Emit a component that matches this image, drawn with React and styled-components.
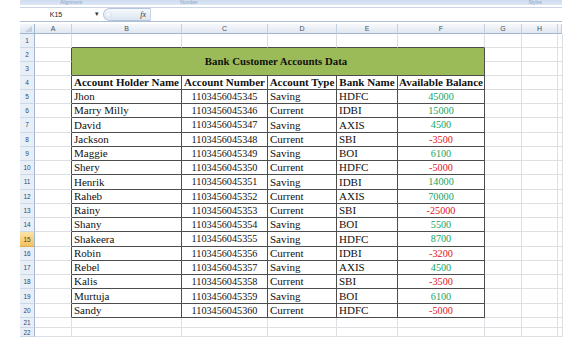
import React from "react";
import styled, { createGlobalStyle } from "styled-components";

const COLS = "15px 37px 110px 86px 69px 61px 87px 37px 36px 4px";
const ROWS =
  "10px 14px 14px 13.5px repeat(17, 14.28px) 10px 9px";

const GRID = "#dcdfe3";
const DARK = "#4d4d4d";

const accounts = [
  ["Jhon", "1103456045345", "Saving", "HDFC", 45000],
  ["Marry Milly", "1103456045346", "Current", "IDBI", 15000],
  ["David", "1103456045347", "Saving", "AXIS", 4500],
  ["Jackson", "1103456045348", "Current", "SBI", -3500],
  ["Maggie", "1103456045349", "Saving", "BOI", 6100],
  ["Shery", "1103456045350", "Current", "HDFC", -5000],
  ["Henrik", "1103456045351", "Saving", "IDBI", 14000],
  ["Raheb", "1103456045352", "Current", "AXIS", 70000],
  ["Rainy", "1103456045353", "Current", "SBI", -25000],
  ["Shany", "1103456045354", "Saving", "BOI", 5500],
  ["Shakeera", "1103456045355", "Saving", "HDFC", 8700],
  ["Robin", "1103456045356", "Current", "IDBI", -3200],
  ["Rebel", "1103456045357", "Saving", "AXIS", 4500],
  ["Kalis", "1103456045358", "Current", "SBI", -3500],
  ["Murtuja", "1103456045359", "Saving", "BOI", 6100],
  ["Sandy", "1103456045360", "Current", "HDFC", -5000],
];

const headers = [
  "Account Holder Name",
  "Account Number",
  "Account Type",
  "Bank Name",
  "Available Balance",
];

const letters = ["A", "B", "C", "D", "E", "F", "G", "H", ""];

export default function App() {
  const emptyTail = (r) =>
    ["G", "H", "I"].map((c) => <Cell key={c + r} />);

  return (
    <Page>
      <GlobalStyle />
      <Ribbon>
        <RibbonLabel style={{ width: 120 }}>Alignment</RibbonLabel>
        <RibbonLabel style={{ width: 120 }}>Number</RibbonLabel>
        <RibbonLabel style={{ flex: 1, textAlign: "right" }}>Styles</RibbonLabel>
      </Ribbon>
      <FormulaBar>
        <NameBox>
          <span>K15</span>
          <DropArrow>▾</DropArrow>
        </NameBox>
        <FxPill>
          <PillDot />
          <Fx>fx</Fx>
        </FxPill>
        <FormulaInput />
      </FormulaBar>

      <Sheet>
        <Corner />
        {letters.map((l, i) => (
          <ColHead key={"h" + i}>{l}</ColHead>
        ))}

        {/* row 1 */}
        <RowHead>1</RowHead>
        <Cell />
        {[0, 1, 2, 3, 4].map((i) => (
          <Cell key={"r1" + i} $bb />
        ))}
        {emptyTail(1)}

        {/* rows 2-3: merged title */}
        <RowHead>2</RowHead>
        <Cell $rb />
        <TitleCell>Bank Customer Accounts Data</TitleCell>
        {emptyTail(2)}
        <RowHead>3</RowHead>
        <Cell $rb />
        {emptyTail(3)}

        {/* row 4: column titles */}
        <RowHead>4</RowHead>
        <Cell $rb />
        {headers.map((h) => (
          <Cell key={h} $rb $bb $bold $align="center">
            {h}
          </Cell>
        ))}
        {emptyTail(4)}

        {accounts.map(([name, num, type, bank, bal], i) => {
          const r = i + 5;
          return (
            <React.Fragment key={num}>
              <RowHead $active={r === 15}>{r}</RowHead>
              <Cell $rb />
              <Cell $rb $bb>{name}</Cell>
              <Cell $rb $bb $align="center" $num>
                {num}
              </Cell>
              <Cell $rb $bb>{type}</Cell>
              <Cell $rb $bb>{bank}</Cell>
              <Cell $rb $bb $align="center" $num $tone={bal < 0 ? "neg" : "pos"}>
                {bal}
              </Cell>
              {emptyTail(r)}
            </React.Fragment>
          );
        })}

        {[21, 22].map((r) => (
          <React.Fragment key={r}>
            <RowHead>{r}</RowHead>
            <Cell />
            {[0, 1, 2, 3, 4].map((i) => (
              <Cell key={r + "-" + i} />
            ))}
            {emptyTail(r)}
          </React.Fragment>
        ))}
      </Sheet>
    </Page>
  );
}

const GlobalStyle = createGlobalStyle`
  html, body {
    margin: 0;
    padding: 0;
    background: #ffffff;
  }
`;

const Page = styled.div`
  width: 582px;
  height: 348px;
  overflow: hidden;
  background: #fff;
`;

const Ribbon = styled.div`
  margin-left: 20px;
  width: 542px;
  height: 5px;
  background: linear-gradient(#cddcef, #dfe8f5);
  display: flex;
  overflow: hidden;
  padding: 0 20px 0 40px;
  box-sizing: border-box;
`;

const RibbonLabel = styled.span`
  font-family: "Liberation Sans", Arial, sans-serif;
  font-size: 5px;
  line-height: 4px;
  color: #8ea6c6;
`;

const FormulaBar = styled.div`
  margin-left: 20px;
  width: 542px;
  height: 15px;
  margin-top: 2px;
  display: flex;
  align-items: stretch;
  border-top: 1px solid #c9d5e4;
  border-bottom: 1px solid #aebfd4;
  box-sizing: border-box;
`;

const NameBox = styled.div`
  width: 80px;
  position: relative;
  display: flex;
  align-items: center;
  justify-content: center;
  font-family: "Liberation Sans", Arial, sans-serif;
  font-size: 7px;
  color: #222;
  padding-right: 8px;
  box-sizing: border-box;
`;

const DropArrow = styled.span`
  position: absolute;
  right: 1px;
  top: 2px;
  font-size: 7px;
  color: #333;
`;

const FxPill = styled.div`
  width: 48px;
  margin: 0 0 0 3px;
  border-radius: 7px 0 0 7px;
  background: linear-gradient(#f6f9fd, #dbe5f1);
  border: 1px solid #b5c5da;
  border-right: 1px solid #c9d5e4;
  display: flex;
  align-items: center;
  justify-content: space-between;
  padding: 0 4px 0 2px;
  box-sizing: border-box;
`;

const PillDot = styled.span`
  width: 6px;
  height: 6px;
  border-radius: 50%;
  background: radial-gradient(circle at 40% 40%, #ffffff, #c8d5e6);
`;

const Fx = styled.span`
  font-family: "Liberation Serif", "Times New Roman", serif;
  font-style: italic;
  font-size: 8px;
  color: #333;
`;

const FormulaInput = styled.div`
  flex: 1;
  background: #fff;
`;

const Sheet = styled.div`
  margin-left: 20px;
  margin-top: 2px;
  width: 542px;
  display: grid;
  grid-template-columns: ${COLS};
  grid-template-rows: ${ROWS};
  font-family: "Liberation Serif", "Times New Roman", serif;
`;

const Corner = styled.div`
  position: relative;
  background: linear-gradient(#f3f6fb, #dde6f1);
  border-right: 1px solid #9eb6ce;
  border-bottom: 1px solid #9eb6ce;
  box-sizing: border-box;
  &::after {
    content: "";
    position: absolute;
    right: 2px;
    bottom: 1px;
    border-left: 7px solid transparent;
    border-bottom: 6px solid #c5cfdc;
  }
`;

const ColHead = styled.div`
  background: linear-gradient(#f6f8fb, #e1e7f0);
  border-right: 1px solid #c5d1e0;
  border-bottom: 1px solid #9eb6ce;
  box-sizing: border-box;
  display: flex;
  align-items: center;
  justify-content: center;
  font-family: "Liberation Sans", Arial, sans-serif;
  font-size: 7px;
  color: #3e4f63;
`;

const RowHead = styled.div`
  background: ${(p) =>
    p.$active ? "linear-gradient(#fbe3a6, #f2c15f)" : "#e9eff7"};
  border-right: 1px solid #9eb6ce;
  border-bottom: 1px solid ${(p) => (p.$active ? "#e0ad52" : "#cdd8e6")};
  box-sizing: border-box;
  display: flex;
  align-items: center;
  justify-content: center;
  font-family: "Liberation Sans", Arial, sans-serif;
  font-size: 6.5px;
  color: ${(p) => (p.$active ? "#5a3d0a" : "#2f4a72")};
`;

const Cell = styled.div`
  border-right: 1px solid ${(p) => (p.$rb ? DARK : GRID)};
  border-bottom: 1px solid ${(p) => (p.$bb ? DARK : GRID)};
  box-sizing: border-box;
  display: flex;
  align-items: flex-end;
  justify-content: ${(p) => (p.$align === "center" ? "center" : "flex-start")};
  padding: 0 2px 1px 2px;
  overflow: hidden;
  white-space: nowrap;
  font-size: ${(p) => (p.$num ? "10.2px" : "11px")};
  font-weight: ${(p) => (p.$bold ? 700 : 400)};
  line-height: 1;
  color: ${(p) =>
    p.$tone === "neg" ? "#e0141c" : p.$tone === "pos" ? "#13a45f" : "#111"};
`;

const TitleCell = styled.div`
  grid-column: span 5;
  grid-row: span 2;
  background: #9bbb59;
  border-right: 1px solid ${DARK};
  border-bottom: 1px solid ${DARK};
  box-sizing: border-box;
  display: flex;
  align-items: center;
  justify-content: center;
  font-size: 10.8px;
  font-weight: 700;
  color: #111;
  padding-right: 4px;
`;
